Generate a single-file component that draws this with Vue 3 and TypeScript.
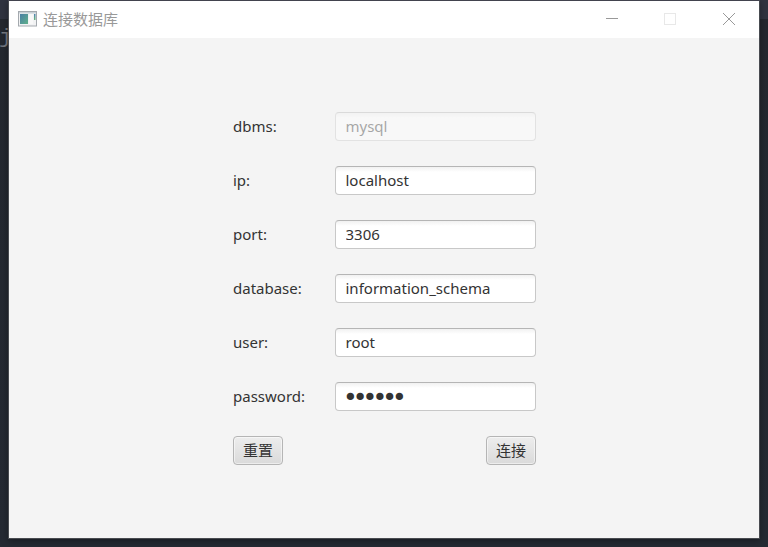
<script setup lang="ts">
import { reactive } from 'vue'

interface Field {
  key: string
  type: 'text' | 'password'
  value: string
  disabled?: boolean
}

const initial: Field[] = [
  { key: 'dbms', type: 'text', value: 'mysql', disabled: true },
  { key: 'ip', type: 'text', value: 'localhost' },
  { key: 'port', type: 'text', value: '3306' },
  { key: 'database', type: 'text', value: 'information_schema' },
  { key: 'user', type: 'text', value: 'root' },
  { key: 'password', type: 'password', value: '123456' },
]

const fields = reactive<Field[]>(initial.map((f) => ({ ...f })))

function reset(): void {
  fields.forEach((field, i) => {
    field.value = initial[i].value
  })
}
</script>

<template>
  <div class="desktop">
    <span class="behind">j</span>
    <main class="window">
      <header class="titlebar">
        <svg class="app-icon" width="20" height="16" viewBox="0 0 20 16">
          <defs>
            <linearGradient id="pane" x1="0" y1="0" x2="1" y2="1">
              <stop offset="0" stop-color="#4a7fa5" />
              <stop offset="1" stop-color="#5fb08a" />
            </linearGradient>
            <linearGradient id="strip" x1="0" y1="0" x2="0" y2="1">
              <stop offset="0" stop-color="#4f83b5" />
              <stop offset="1" stop-color="#68b878" />
            </linearGradient>
          </defs>
          <rect x="0.5" y="0.5" width="18" height="14.5" fill="#f1f2f3" stroke="#a4a9ae" />
          <rect x="1" y="1" width="17" height="1.5" fill="#c9d1d7" />
          <rect x="2" y="3" width="8" height="10" fill="url(#pane)" />
          <rect x="11" y="3" width="4" height="10" fill="#f8f8f8" />
          <rect x="16" y="3" width="1.5" height="6" fill="url(#strip)" />
        </svg>
        <h1 class="title">连接数据库</h1>
        <div class="controls">
          <svg width="12" height="12" viewBox="0 0 12 12"><path d="M0 5.5H12" stroke="#999" /></svg>
          <svg width="12" height="12" viewBox="0 0 12 12"><rect x="0.5" y="0.5" width="11" height="11" fill="none" stroke="#e8e8e8" /></svg>
          <svg width="12" height="12" viewBox="0 0 12 12"><path d="M0 0L12 12M12 0L0 12" stroke="#999" /></svg>
        </div>
      </header>
      <form class="form" autocomplete="off" @submit.prevent>
        <label v-for="field in fields" :key="field.key" class="row">
          <span class="label">{{ field.key }}:</span>
          <input
            v-model="field.value"
            class="input"
            :class="{ secret: field.type === 'password' }"
            :type="field.type"
            :disabled="field.disabled"
            spellcheck="false"
          />
        </label>
        <div class="actions">
          <button class="button" type="button" @click="reset">重置</button>
          <button class="button" type="submit">连接</button>
        </div>
      </form>
    </main>
  </div>
</template>

<style>
body {
  overflow: hidden;
}
</style>

<style scoped>
.desktop {
  position: relative;
  box-sizing: border-box;
  height: 547px;
  padding: 0 8px 8px;
  overflow: hidden;
  background: linear-gradient(#303440 0, #303440 19px, #24282f 19px, #252a33 100%);
  font-family: 'Noto Sans', 'Noto Sans CJK SC', sans-serif;
}
.behind {
  position: absolute;
  left: 0;
  top: 25px;
  width: 8px;
  color: #777b82;
  font: 21px/26px 'Liberation Mono', monospace;
  text-indent: -1px;
}
.window {
  position: relative;
  box-sizing: border-box;
  height: 539px;
  border: 1px solid #484b50;
  border-top-color: #42434e;
  background: #f4f4f4;
  box-shadow: 0 2px 7px rgba(0, 0, 0, 0.35);
}
.titlebar {
  display: flex;
  align-items: center;
  box-sizing: border-box;
  height: 37px;
  padding: 0 24px 1px 9px;
  background: #fff;
}
.title {
  margin: 0 0 0 5px;
  color: #999;
  font-size: 15px;
  font-weight: 400;
  line-height: 20px;
}
.controls {
  display: flex;
  gap: 46px;
  margin-left: auto;
}
.controls svg:not(:last-child) {
  position: relative;
  left: -1px;
}
.controls svg,
.app-icon {
  display: block;
}
.form {
  display: flex;
  flex-direction: column;
  gap: 25px;
  width: 303px;
  margin: 74px 0 0 224px;
}
.row {
  display: grid;
  grid-template-columns: 102px 201px;
  align-items: center;
  height: 29px;
}
.label {
  padding-bottom: 2px;
  color: #333;
  font-size: 15px;
  line-height: 20px;
}
.input {
  box-sizing: border-box;
  width: 201px;
  height: 29px;
  margin: 0;
  padding: 0 9px 1px 9.5px;
  border: 1px solid #c8c8c8;
  border-top-color: #b5b5b5;
  border-radius: 4px;
  outline: none;
  background: linear-gradient(#f1f1f1, #fff 5px);
  color: #333;
  font: 15px/20px 'Noto Sans', sans-serif;
}
.input:disabled {
  opacity: 0.4;
}
.secret {
  padding: 1px 7px 0;
  font: 25px/26px 'DejaVu Sans', sans-serif;
  letter-spacing: -4.95px;
}
.actions {
  display: flex;
  justify-content: space-between;
}
.button {
  box-sizing: border-box;
  width: 50px;
  height: 29px;
  margin: 0;
  padding: 0 0 2px;
  border: 1px solid #b5b5b5;
  border-radius: 4px;
  background: linear-gradient(#ededed, #dadada);
  box-shadow: inset 0 0 0 1px rgba(255, 255, 255, 0.5);
  color: #333;
  font: 15px/20px 'Noto Sans CJK SC', sans-serif;
}
</style>
